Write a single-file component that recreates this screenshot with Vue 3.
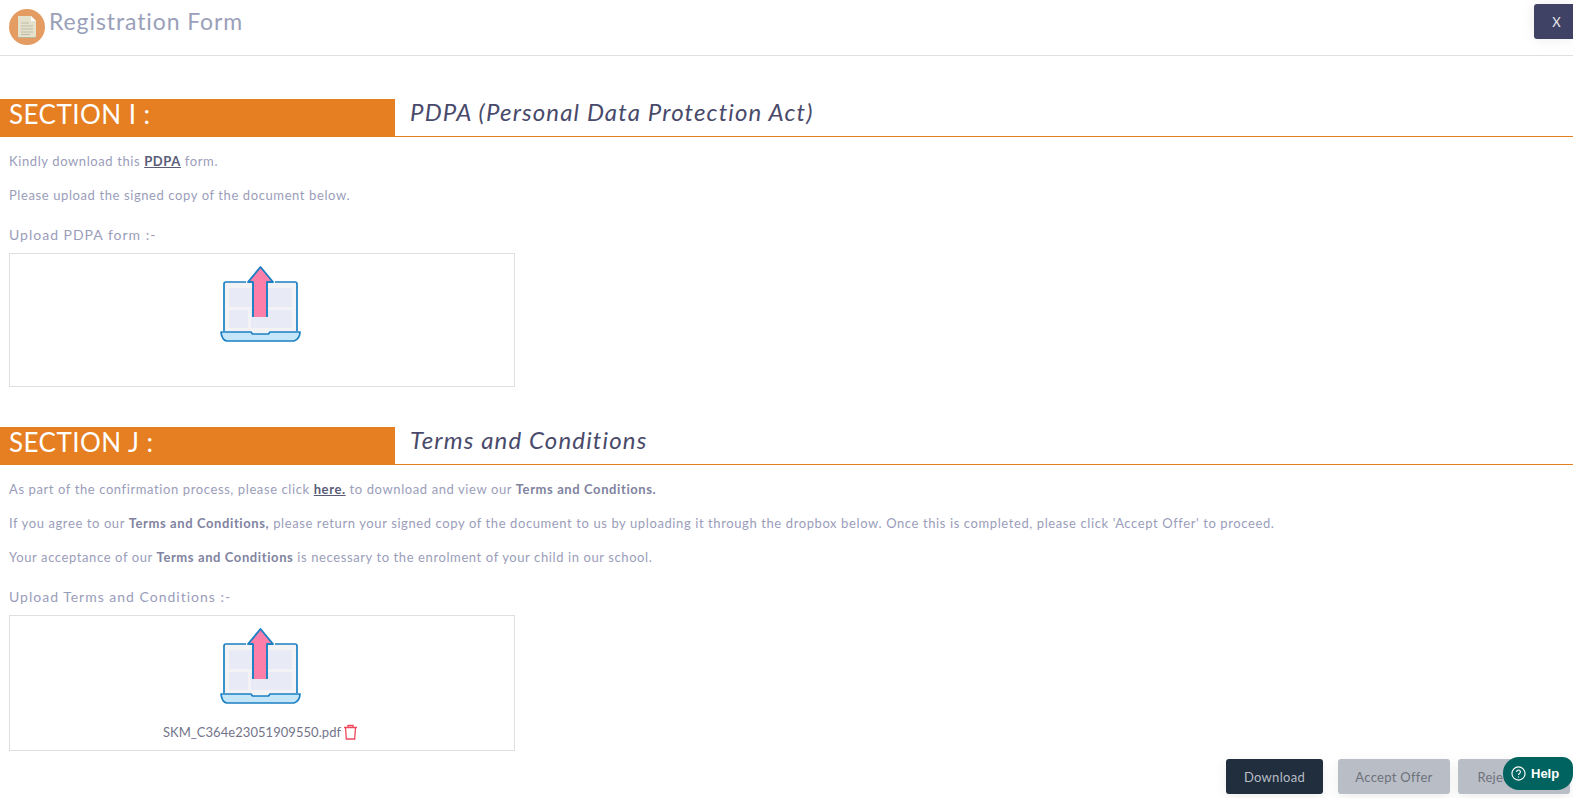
<template>
  <div class="modal">
    <header class="modal-header">
      <div class="logo">
        <svg width="36" height="36" viewBox="0 0 36 36">
          <circle cx="18" cy="18" r="18" fill="#e49c62" />
          <path d="M9 7h13l5 5v16q0 1-1 1H10q-1 0-1-1z" fill="#b9b59f" />
          <path d="M9 7h13l5 5v15q0 1-1 1H10q-1 0-1-1z" fill="#e4e2cc" />
          <path d="M22 7l5 5h-5z" fill="#fff" />
          <path d="M12 14h8M12 17h12M12 20h12M12 23h12M12 25.500h9" stroke="#bdbba5" stroke-width="1" />
        </svg>
      </div>
      <h1 class="modal-title">Registration Form</h1>
      <button class="close-btn">X</button>
    </header>

    <section v-for="section in sections" :key="section.label" class="section">
      <div class="section-head">
        <div class="section-label">{{ section.label }}</div>
        <div class="section-title">{{ section.title }}</div>
      </div>
      <div class="section-body">
        <p v-if="section.label === 'SECTION I :'">Kindly download this <a>PDPA</a> form.</p>
        <p v-if="section.label === 'SECTION I :'">Please upload the signed copy of the document below.</p>
        <template v-else>
          <p>As part of the confirmation process, please click <a>here.</a> to download and view our <b>Terms and Conditions.</b></p>
          <p>If you agree to our <b>Terms and Conditions,</b> please return your signed copy of the document to us by uploading it through the dropbox below. Once this is completed, please click 'Accept Offer' to proceed.</p>
          <p>Your acceptance of our <b>Terms and Conditions</b> is necessary to the enrolment of your child in our school.</p>
        </template>
        <label class="upload-label">{{ section.upload }}</label>
        <div class="dropzone" :class="{ filled: section.file }">
          <svg class="upload-icon" width="81" height="77" viewBox="0 0 81 77">
            <path d="M4 19q0-2 2-2h69q2 0 2 2v49H4z" fill="#f3f3f6" />
            <path d="M9 23h63v19H9zM9 45h19v18H9zM31 45h41v18H31z" fill="#e8eaf5" />
            <path d="M26 17H6q-2 0-2 2v47M55 17h20q2 0 2 2v47" fill="none" stroke="#1b80c4" stroke-width="1.700" />
            <path d="M1 67h30l1.500 2h16l1.500-2h30q0 3-1.500 5.500T74 76H7q-3 0-4.500-3.500T1 67z" fill="#c5e6f8" stroke="#1b80c4" stroke-width="1.700" stroke-linejoin="round" />
            <path d="M33 52V17h-5L40.500 2 53 17h-6v35z" fill="#fb7fa8" />
            <path d="M33 52V17h-5L40.500 2 53 17h-6v35" fill="none" stroke="#1b80c4" stroke-width="1.900" stroke-linejoin="round" />
          </svg>
          <div v-if="section.file" class="file-row">
            <span>{{ section.file }}</span>
            <svg width="15" height="16" viewBox="0 0 15 16" fill="none" stroke="#f0475c" stroke-width="1.300">
              <path d="M1 3.500h13M5 3.500V1.500h5v2M2.500 3.500l.8 11.500h8.400l.8-11.500" />
            </svg>
          </div>
        </div>
      </div>
    </section>

    <footer class="actions">
      <button class="btn dark">Download</button>
      <button class="btn muted">Accept Offer</button>
      <button class="btn muted">Reject Offer</button>
    </footer>

    <button class="help">
      <svg width="15" height="15" viewBox="0 0 16 16" fill="none" stroke="#fff" stroke-width="1.200">
        <circle cx="8" cy="8" r="7" />
        <path d="M6 6.300a2 2 0 1 1 3 1.700q-1 .5-1 1.700M8 11.300v1" />
      </svg>
      Help
    </button>
  </div>
</template>

<script setup>
const sections = [
  {
    label: "SECTION I :",
    title: "PDPA (Personal Data Protection Act)",
    upload: "Upload PDPA form :-",
    file: "",
  },
  {
    label: "SECTION J :",
    title: "Terms and Conditions",
    upload: "Upload Terms and Conditions :-",
    file: "SKM_C364e23051909550.pdf",
  },
];
</script>

<style>
html,
body {
  margin: 0;
  height: 100%;
  overflow: hidden;
  background: #fff;
}
</style>

<style scoped>
.modal {
  position: relative;
  height: 798px;
  overflow: hidden;
  font-family: "Lato", "Open Sans", sans-serif;
  color: #9a9dba;
}

.modal-header {
  display: flex;
  align-items: flex-start;
  height: 55px;
  border-bottom: 1px solid #dedfe2;
  padding-left: 9px;
}

.logo {
  margin-top: 9px;
  height: 36px;
}

.modal-title {
  margin: 5px 0 0 4px;
  font-size: 23px;
  line-height: 32px;
  font-weight: 400;
  letter-spacing: 0.9px;
  color: #9a9fba;
}

.close-btn {
  margin: 4px 0 0 auto;
  width: 39px;
  height: 35px;
  padding: 0 0 0 6px;
  border: none;
  border-radius: 3px 0 0 3px;
  background: #3f4265;
  color: #e8e8ee;
  font-family: "Lato", sans-serif;
  font-size: 13px;
  box-shadow: 0 0 14px rgba(0, 0, 0, 0.08);
}

.section {
  margin-top: 43px;
}

.section + .section {
  margin-top: 40px;
}

.section-head {
  display: flex;
  height: 37px;
  border-bottom: 1px solid #e67e22;
}

.section-label {
  width: 386px;
  padding-left: 9px;
  background: #e67e22;
  color: #fff;
  font-size: 26px;
  line-height: 31px;
  letter-spacing: 0.45px;
}

.section-title {
  padding-left: 15px;
  font-size: 24px;
  line-height: 26px;
  font-style: italic;
  letter-spacing: 1.15px;
  color: #494a6b;
}

.section-body {
  padding: 15px 9px 0;
}

.section-body p {
  margin: 0 0 16px;
  font-size: 13px;
  line-height: 18px;
  letter-spacing: 0.6px;
}

.section-body a {
  font-weight: 700;
  color: #5a5c78;
  text-decoration: underline;
}

.section-body b {
  font-weight: 700;
  color: #80839f;
}

.upload-label {
  display: block;
  margin-top: 21px;
  font-size: 14px;
  line-height: 20px;
  letter-spacing: 1px;
}

.dropzone {
  display: flex;
  flex-direction: column;
  align-items: center;
  width: 501px;
  height: 121px;
  margin-top: 8px;
  padding: 11px 3px 0 0;
  border: 1px solid #dddfe3;
}

.dropzone.filled {
  height: 123px;
}

.upload-icon {
  display: block;
  flex: none;
}

.file-row {
  display: flex;
  align-items: center;
  gap: 2px;
  margin-top: 19px;
  font-size: 13px;
  line-height: 18px;
  letter-spacing: 0.05px;
  color: #73758a;
}

.actions {
  position: absolute;
  right: 3px;
  bottom: 4px;
  display: flex;
  gap: 8px;
}

.btn {
  height: 35px;
  border: none;
  border-radius: 3px;
  font-family: "Lato", sans-serif;
  font-size: 13px;
  letter-spacing: 0.3px;
  box-shadow: 0 4px 14px rgba(0, 0, 0, 0.07);
}

.btn.dark {
  width: 97px;
  margin-right: 7px;
  background: #202e3e;
  color: #b8bdc4;
}

.btn.muted {
  width: 112px;
  background: #b9bdc6;
  color: #6e727c;
}

.help {
  position: absolute;
  right: 0;
  bottom: 8px;
  display: flex;
  align-items: center;
  gap: 5px;
  width: 70px;
  height: 33px;
  padding: 0 0 0 8px;
  border: none;
  border-radius: 16px 10px 16px 16px;
  background: #00635f;
  color: #fff;
  font-family: "Liberation Sans", sans-serif;
  font-size: 13px;
  font-weight: 700;
}
</style>
